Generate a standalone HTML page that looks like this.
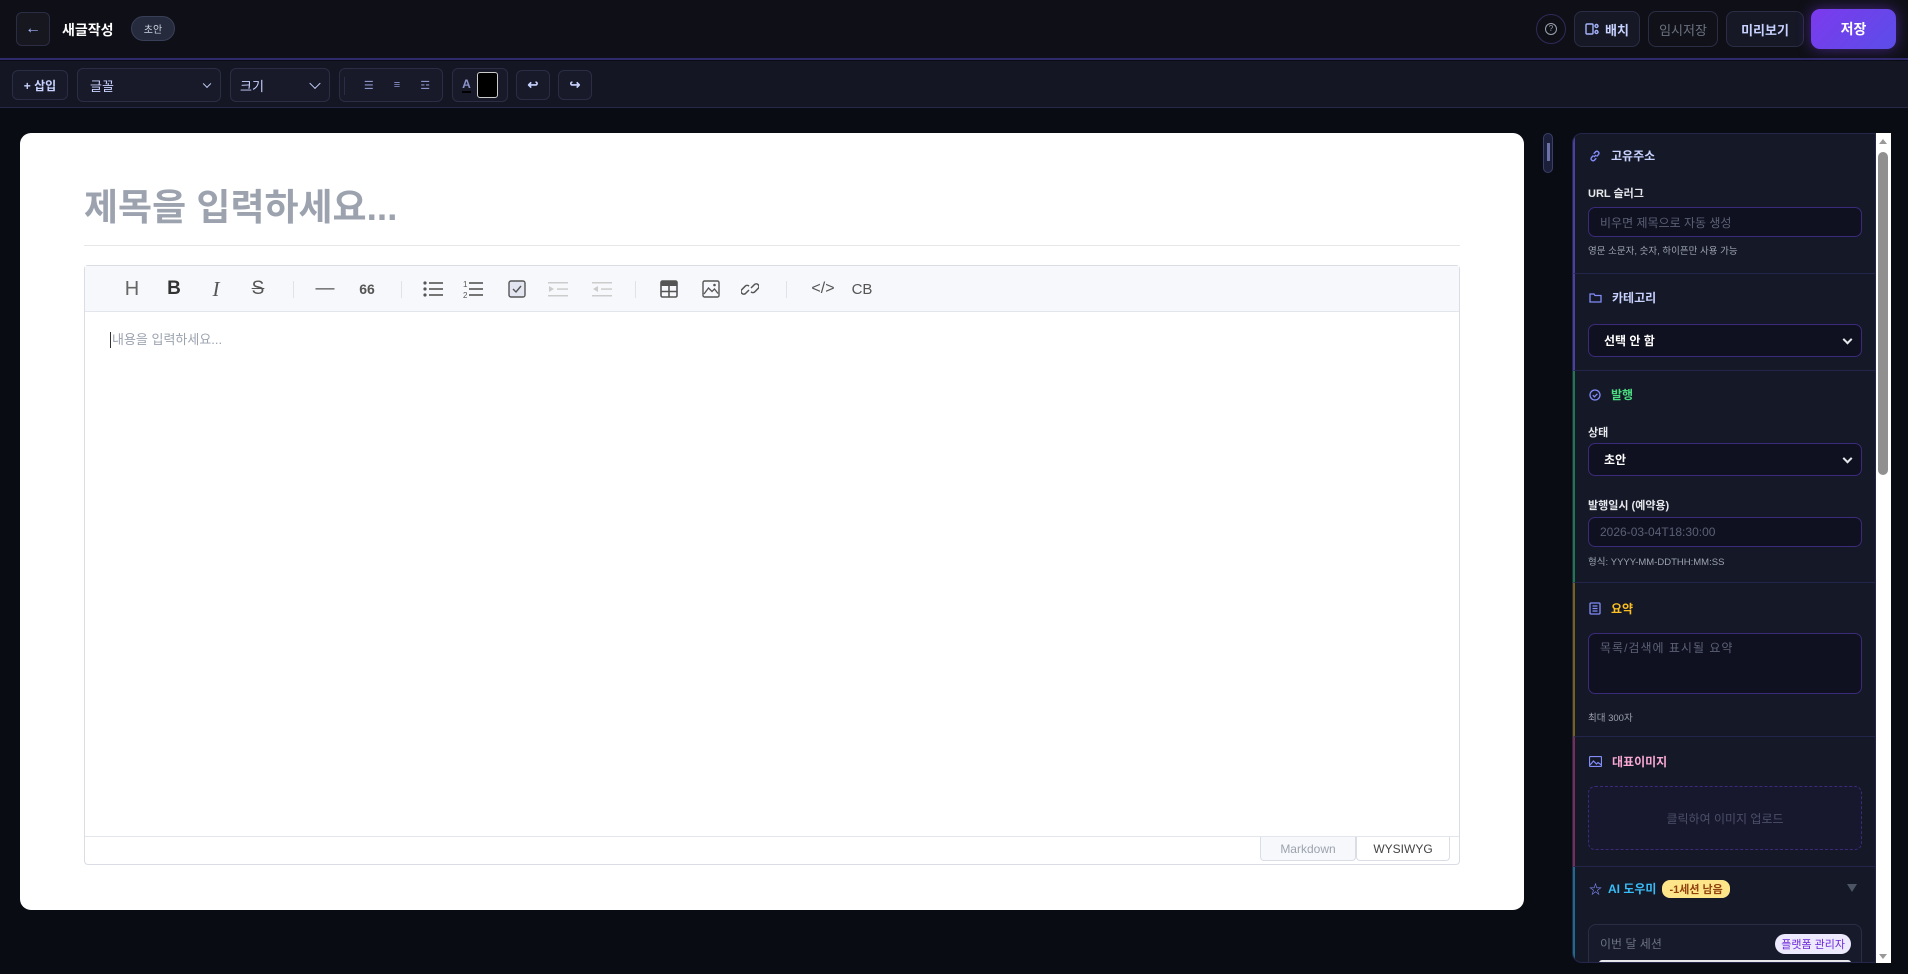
<!DOCTYPE html>
<html><head><meta charset="utf-8"><style>
*{box-sizing:border-box;margin:0;padding:0}
body{width:1908px;height:974px;overflow:hidden;background:#0a0c13;font-family:"Liberation Sans","Noto Sans CJK KR",sans-serif;position:relative;color:#e5e7eb}
.a{position:absolute}
.hdr{left:0;top:0;width:1908px;height:60px;background:#0f1017;border-bottom:2px solid #2f2a6b}
.tb{left:0;top:61px;width:1908px;height:47px;background:#141623;border-bottom:1px solid #262848}
.btn{position:absolute;border:1px solid #2b2d45;border-radius:6px;background:#161826;display:flex;align-items:center;justify-content:center;font-size:13px;font-weight:bold;color:#c7d2fe}
.card{left:20px;top:133px;width:1504px;height:777px;background:#fff;border-radius:11px}
.ed{left:84px;top:265px;width:1376px;height:600px;border:1px solid #dadde6;border-radius:4px;background:#fff}
.etb{left:0;top:0;width:100%;height:46px;background:#f7f8fb;border-bottom:1px solid #e4e6ee}
.ic{position:absolute;top:12px;width:24px;height:22px;display:flex;align-items:center;justify-content:center;color:#555;font-size:19px}
.sep{position:absolute;top:15px;width:1px;height:17px;background:#e0e2e8}
.sb{left:1572px;top:133px;width:304px;height:830px;background:#151827;border:1px solid #24264a;border-radius:10px 0 0 10px;overflow:hidden}
.sec{position:absolute;left:0;width:100%;border-bottom:1px solid #23254a}
.sh{position:absolute;left:14px;font-size:12px;font-weight:bold;display:flex;align-items:center;gap:10px}
.lbl{position:absolute;left:13px;font-size:11px;font-weight:bold;color:#e5e7eb}
.inp{position:absolute;left:13px;width:274px;border:1px solid #3b2a7a;border-radius:7px;background:#0f1120;font-size:12px;color:#5b6075;padding-left:11px;display:flex;align-items:center}
.help{position:absolute;left:13px;font-size:9.5px;color:#9ca3af}
.chev{position:absolute;right:10px;top:50%;width:7px;height:7px;border-right:2px solid #e5e7eb;border-bottom:2px solid #e5e7eb;transform:translateY(-70%) rotate(45deg)}
</style></head><body>
<div class="a hdr"></div>
<div class="btn" style="left:16px;top:12px;width:34px;height:34px;background:#16171f;color:#a5b4fc;font-weight:normal;font-size:16px">←</div>
<div class="a" style="left:62px;top:20px;font-size:14px;font-weight:bold;color:#fff">새글작성</div>
<div class="a" style="left:131px;top:16px;width:44px;height:25px;border-radius:13px;background:#262a3d;border:1px solid #3a3f58;font-size:10px;color:#cbd5e1;display:flex;align-items:center;justify-content:center">초안</div>

<div class="a" style="left:1536px;top:14px;width:30px;height:30px;border-radius:50%;border:1px solid #2e2a5a;display:flex;align-items:center;justify-content:center"><div style="width:12px;height:12px;border:1.3px solid #9ca3af;border-radius:50%;font-size:8px;color:#9ca3af;text-align:center;line-height:10px">?</div></div>
<div class="btn" style="left:1574px;top:11px;width:66px;height:36px;border-radius:8px;gap:6px"><svg width="14" height="14" viewBox="0 0 14 14" fill="none" stroke="#a5b4fc" stroke-width="1.4"><rect x="1" y="2" width="7" height="10" rx="1"/><circle cx="11.5" cy="4" r="1.5"/><circle cx="11.5" cy="10" r="1.5"/></svg>배치</div>
<div class="btn" style="left:1648px;top:11px;width:70px;height:36px;border-radius:8px;background:#111219;color:#6b7280;font-weight:normal">임시저장</div>
<div class="btn" style="left:1726px;top:11px;width:78px;height:36px;border-radius:8px;color:#c7d2fe">미리보기</div>
<div class="btn" style="left:1811px;top:9px;width:85px;height:40px;border-radius:9px;border:none;background:linear-gradient(135deg,#7c3aed,#5b4de8);color:#fff;font-size:14px;box-shadow:0 0 14px rgba(124,58,237,.5)">저장</div>

<div class="a tb"></div>
<div class="btn" style="left:12px;top:70px;width:56px;height:30px;background:#181a2a;font-size:12px">+ 삽입</div>
<div class="btn" style="left:77px;top:68px;width:144px;height:34px;background:#181a2a;justify-content:flex-start;padding-left:12px;font-weight:normal">글꼴<div class="chev" style="width:6px;height:6px;border-color:#c7d2fe;border-width:1.5px"></div></div>
<div class="btn" style="left:230px;top:68px;width:100px;height:34px;background:#181a2a;justify-content:flex-start;padding-left:9px;font-weight:normal">크기<div class="chev" style="width:8px;height:8px;border-color:#c7d2fe;border-width:1.5px"></div></div>
<div class="btn" style="left:339px;top:68px;width:104px;height:34px;background:#181a2a;font-weight:normal;color:#8b93c9;font-size:11px;gap:20px;padding-left:12px"><span style="position:absolute;left:4px;top:8px;width:1px;height:18px;background:#2b2d45"></span><span>☰</span><span>≡</span><span>☲</span></div>
<div class="btn" style="left:452px;top:68px;width:56px;height:34px;background:#181a2a;gap:6px"><span style="color:#8b93c9;font-size:12px;border-bottom:2px solid #000">A</span><span style="width:21px;height:26px;background:#000;border:1px solid #ccc;border-radius:3px"></span></div>
<div class="btn" style="left:516px;top:70px;width:34px;height:30px;background:#181a2a">↩</div>
<div class="btn" style="left:558px;top:70px;width:34px;height:30px;background:#181a2a">↪</div>

<div class="a card"></div>
<div class="a" style="left:84px;top:177px;font-size:37px;font-weight:bold;color:#9ca3af">제목을 입력하세요...</div>
<div class="a" style="left:84px;top:245px;width:1376px;height:1px;background:#e5e7eb"></div>
<div class="a ed">
 <div class="a etb">
  <div class="ic" style="left:35px;font-weight:normal;font-size:20px;color:#666">H</div>
  <div class="ic" style="left:77px;font-weight:bold;color:#333">B</div>
  <div class="ic" style="left:119px;font-style:italic;font-family:'Liberation Serif',serif;font-size:21px">I</div>
  <div class="ic" style="left:161px;text-decoration:line-through">S</div>
  <div class="sep" style="left:208px"></div>
  <div class="ic" style="left:228px">—</div>
  <div class="ic" style="left:270px;font-size:14px;font-weight:bold">66</div>
  <div class="sep" style="left:316px"></div>
  <div class="ic" style="left:336px"><svg width="20" height="18"><g fill="#555"><circle cx="2" cy="3" r="1.6"/><circle cx="2" cy="9" r="1.6"/><circle cx="2" cy="15" r="1.6"/><rect x="6" y="2.2" width="14" height="1.6"/><rect x="6" y="8.2" width="14" height="1.6"/><rect x="6" y="14.2" width="14" height="1.6"/></g></svg></div>
  <div class="ic" style="left:376px"><svg width="20" height="18"><g fill="#555"><text x="0" y="7" font-size="8" font-family="Liberation Sans">1</text><text x="0" y="18" font-size="8" font-family="Liberation Sans">2</text><rect x="6" y="2.2" width="14" height="1.6"/><rect x="6" y="8.2" width="14" height="1.6"/><rect x="6" y="14.2" width="14" height="1.6"/></g></svg></div>
  <div class="ic" style="left:420px"><svg width="18" height="18"><rect x="1" y="1" width="16" height="16" rx="2" fill="#e3e6f0" stroke="#555" stroke-width="1.4"/><path d="M5 9l3 3 5-6" stroke="#555" fill="none" stroke-width="1.4"/></svg></div>
  <div class="ic" style="left:461px"><svg width="20" height="18"><g fill="#ccc"><rect x="0" y="2" width="20" height="1.5"/><rect x="0" y="15" width="20" height="1.5"/><path d="M1 6l5 3-5 3z"/><rect x="9" y="8.3" width="11" height="1.5"/></g></svg></div>
  <div class="ic" style="left:505px"><svg width="20" height="18"><g fill="#ccc"><rect x="0" y="2" width="20" height="1.5"/><rect x="0" y="15" width="20" height="1.5"/><path d="M6 6l-5 3 5 3z"/><rect x="9" y="8.3" width="11" height="1.5"/></g></svg></div>
  <div class="sep" style="left:550px"></div>
  <div class="ic" style="left:572px"><svg width="18" height="18"><rect x="1" y="1" width="16" height="16" rx="1.5" fill="none" stroke="#555" stroke-width="1.6"/><rect x="1" y="1" width="16" height="5" fill="#555"/><path d="M9 5v12M1 11.5h16" stroke="#555" stroke-width="1.6"/></svg></div>
  <div class="ic" style="left:614px"><svg width="18" height="18"><rect x="1" y="1" width="16" height="16" rx="1.5" fill="none" stroke="#555" stroke-width="1.4"/><path d="M2 14l4.5-6 3.5 3.5 2.5-2.5 3.5 4.5" fill="none" stroke="#555" stroke-width="1.3"/><circle cx="12.5" cy="5" r="1.3" fill="#555"/></svg></div>
  <div class="ic" style="left:653px"><svg width="18" height="18" fill="none" stroke="#555" stroke-width="1.5"><path d="M8 10l-3.5 3.5a2.7 2.7 0 0 1-3.8-3.8l3.5-3.5a2.7 2.7 0 0 1 3.8 0"/><path d="M10 8l3.5-3.5a2.7 2.7 0 0 1 3.8 3.8l-3.5 3.5a2.7 2.7 0 0 1-3.8 0"/></svg></div>
  <div class="sep" style="left:701px"></div>
  <div class="ic" style="left:723px;font-size:16px;width:30px">&lt;/&gt;</div>
  <div class="ic" style="left:765px;font-size:15px">CB</div>
 </div>
 <div class="a" style="left:25px;top:66px;font-size:13px;color:#9ca3af;border-left:1px solid #333;padding-left:1px;line-height:16px">내용을 입력하세요...</div>
 <div class="a" style="left:0;top:570px;width:100%;height:1px;background:#e4e6ee"></div>
 <div class="a" style="left:1175px;top:571px;width:96px;height:24px;background:#f7f8fb;border:1px solid #dadde6;border-top:none;border-radius:0 0 4px 4px;font-size:12px;color:#9ca3af;display:flex;align-items:center;justify-content:center">Markdown</div>
 <div class="a" style="left:1271px;top:571px;width:94px;height:24px;background:#fff;border:1px solid #dadde6;border-top:none;border-radius:0 0 4px 4px;font-size:12px;color:#444;display:flex;align-items:center;justify-content:center">WYSIWYG</div>
</div>

<div class="a" style="left:1543px;top:133px;width:10px;height:40px;border:1px solid #3a3f6a;border-radius:5px;background:#1c1f3a"><div style="margin:9px auto 0;width:3px;height:18px;background:#6b72a8"></div></div>

<div class="a sb">
 <div class="sec" style="top:0;height:140px;border-left:2px solid #4c3fa0">
  <div class="sh" style="top:13px;color:#c7d2fe"><svg width="12" height="12" fill="none" stroke="#818cf8" stroke-width="1.4"><path d="M5 7l2-2M4.5 5.5l-2 2a2 2 0 0 0 2.8 2.8l2-2M7.5 6.5l2-2a2 2 0 0 0-2.8-2.8l-2 2"/></svg>고유주소</div>
  <div class="lbl" style="top:51px">URL 슬러그</div>
  <div class="inp" style="top:73px;height:30px">비우면 제목으로 자동 생성</div>
  <div class="help" style="top:109px">영문 소문자, 숫자, 하이픈만 사용 가능</div>
 </div>
 <div class="sec" style="top:140px;height:97px;border-left:2px solid #4c3fa0">
  <div class="sh" style="top:15px;color:#c7d2fe"><svg width="13" height="11" fill="none" stroke="#818cf8" stroke-width="1.3"><path d="M1 2h4l1 1.5h6v6.5h-11z"/></svg>카테고리</div>
  <div class="inp" style="top:50px;height:33px;color:#fff;font-weight:bold;font-size:12px;padding-left:15px">선택 안 함<div class="chev"></div></div>
 </div>
 <div class="sec" style="top:237px;height:212px;border-left:2px solid #1f7a4a">
  <div class="sh" style="top:15px;color:#4ade80"><svg width="12" height="12" fill="none" stroke="#818cf8" stroke-width="1.3"><circle cx="6" cy="6" r="5"/><path d="M3.8 6.2l1.6 1.6 3-3"/></svg>발행</div>
  <div class="lbl" style="top:53px">상태</div>
  <div class="inp" style="top:72px;height:33px;color:#fff;font-weight:bold;font-size:12px;padding-left:15px">초안<div class="chev"></div></div>
  <div class="lbl" style="top:126px">발행일시 (예약용)</div>
  <div class="inp" style="top:146px;height:30px">2026-03-04T18:30:00</div>
  <div class="help" style="top:183px">형식: YYYY-MM-DDTHH:MM:SS</div>
 </div>
 <div class="sec" style="top:449px;height:154px;border-left:2px solid #7a6212">
  <div class="sh" style="top:17px;color:#fbbf24"><svg width="12" height="13" fill="none" stroke="#818cf8" stroke-width="1.3"><rect x="1" y="1" width="10" height="11" rx="1"/><path d="M3.5 4h5M3.5 6.5h5M3.5 9h5"/></svg>요약</div>
  <div class="inp" style="top:50px;height:61px;align-items:flex-start;padding-top:5px;letter-spacing:1px">목록/검색에 표시될 요약</div>
  <div class="help" style="top:127px">최대 300자</div>
 </div>
 <div class="sec" style="top:603px;height:130px;border-left:2px solid #7a2d55">
  <div class="sh" style="top:16px;color:#f9a8d4"><svg width="13" height="11" fill="none" stroke="#818cf8" stroke-width="1.2"><rect x="0.5" y="0.5" width="12" height="10" rx="1"/><path d="M1 9l3.5-4 3 3 1.5-1.5 3.5 2.5"/></svg>대표이미지</div>
  <div class="inp" style="top:49px;height:64px;border:1px dashed #3b2a7a;background:#17182e;justify-content:center;padding:0;color:#4b5068">클릭하여 이미지 업로드</div>
 </div>
 <div class="sec" style="top:733px;height:100px;border-left:2px solid #1e6c8a;border-bottom:none">
  <div class="sh" style="top:12px;color:#38bdf8;gap:6px"><span style="color:#818cf8;font-size:13px">☆</span>AI 도우미<span style="background:#fde68a;color:#92400e;border-radius:8px;padding:1px 7px;font-size:11px">-1세션 남음</span></div>
  <div class="a" style="right:18px;top:17px;width:0;height:0;border-left:5px solid transparent;border-right:5px solid transparent;border-top:8px solid #4b5563"></div>
  <div class="a" style="left:13px;top:57px;width:274px;height:50px;border:1px solid #2b2d45;border-radius:8px;background:#171a2b">
   <div class="a" style="left:11px;top:10px;font-size:12px;color:#6b7280">이번 달 세션</div>
   <div class="a" style="right:10px;top:9px;background:#ede9fe;color:#6d28d9;border-radius:10px;padding:2px 6px;font-size:11px">플랫폼 관리자</div>
   <div class="a" style="left:10px;top:35px;width:252px;height:6px;background:#e5e7eb;border-radius:3px"></div>
  </div>
 </div>
</div>
<div class="a" style="left:1876px;top:133px;width:15px;height:830px;background:#fff"><div class="a" style="left:2px;top:19px;width:10px;height:323px;background:#909090;border-radius:5px"></div><div class="a" style="left:3px;top:6px;border-left:4px solid transparent;border-right:4px solid transparent;border-bottom:5px solid #999"></div><div class="a" style="left:3px;bottom:4px;border-left:4px solid transparent;border-right:4px solid transparent;border-top:5px solid #999"></div></div>
</body></html>
